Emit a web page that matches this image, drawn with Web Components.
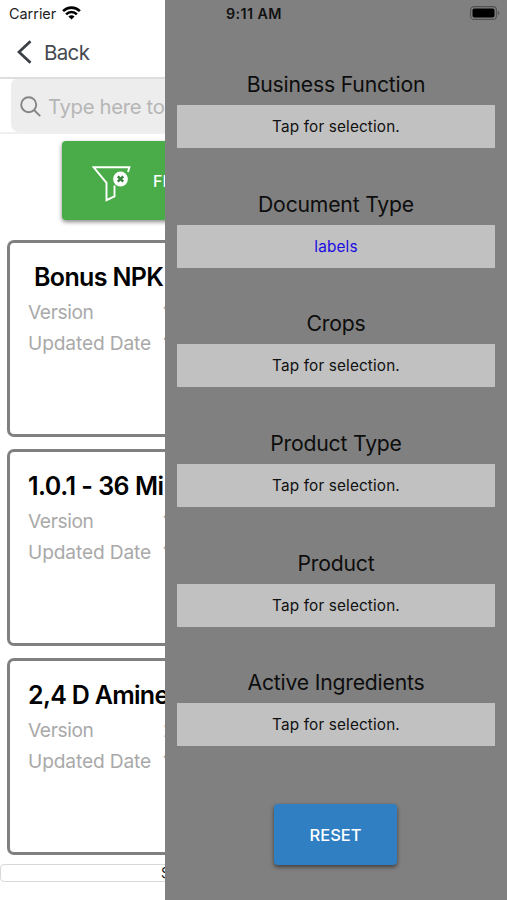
<!DOCTYPE html>
<html lang="en"><head><meta charset="utf-8"><title>Filters</title>
<style>
html,body{margin:0;height:100%;background:#fff;overflow:hidden}
body{font-family:Inter,"Liberation Sans",sans-serif}
</style></head><body>
<app-shell></app-shell>
<script>
const define=(name,html)=>customElements.define(name,class extends HTMLElement{
  connectedCallback(){
    if(this.shadowRoot)return;
    const root=this.attachShadow({mode:'open'});
    root.innerHTML=typeof html==='function'?html(this):html;
  }
});

define('status-left',`<style>
:host{display:flex;height:28px;align-items:center;gap:6px;padding:0 0 2px 9px;box-sizing:border-box;font-size:14.4px;color:#222}
svg{display:block;margin-top:-1px}
</style><span>Carrier</span>
<svg width="19" height="14" viewBox="0 0 19 14" fill="none" stroke="#000" stroke-width="2.6"><path d="M1.100 5.100C5.800.4 13.200.4 17.900 5.100"/><path d="M4.100 8.300c3-3 7.800-3 10.800 0"/><path d="M9.500 13.600 6.400 10.600c1.800-1.700 4.400-1.700 6.200 0z" fill="#000" stroke="none"/></svg>`);

define('nav-back',`<style>
:host{display:flex;height:51px;align-items:center;gap:12px;padding:0 0 1px 17px;box-sizing:border-box;border-bottom:2px solid #dedede;font-size:20.5px;color:#464a50;letter-spacing:-.65px}
svg{display:block}
</style><svg width="15" height="24" viewBox="0 0 15 24" fill="none" stroke="#3c4047" stroke-width="2.8"><path d="M13.500 1.200 2 12l11.500 10.800"/></svg><span><slot></slot></span>`);

define('search-field',`<style>
:host{display:block;height:55px;padding-left:11px;box-sizing:border-box;border-bottom:2px solid #f0f0f0}
div{height:53px;display:flex;align-items:center;gap:7px;background:#ededed;border-radius:6px 0 0 8px;padding:2px 0 0 9px;box-sizing:border-box;white-space:nowrap;font-size:20.300px;letter-spacing:-.32px;color:#b6b6b6}
svg{display:block;flex:none}
</style><div><svg width="21" height="21" viewBox="0 0 21 21" fill="none" stroke="#858585" stroke-width="1.900"><circle cx="8.700" cy="8.700" r="7.500"/><path d="m14 14 6.200 6.200"/></svg><span><slot></slot></span></div>`);

define('filter-button',`<style>
:host{display:flex;flex:none;align-items:center;width:383px;height:79px;margin:7px 0 0 62px;padding-left:30px;box-sizing:border-box;gap:22px;border-radius:4px;background:#4aac48;color:#fff;font-weight:500;font-size:16px;box-shadow:0 2px 4px #0007}
svg{display:block;margin-top:6px}
</style><svg width="39" height="36" viewBox="0 0 39 36" fill="none" stroke="#fff" stroke-width="1.900"><path d="M36 6 37.400 1.300H1.700L14.500 16.800V34.200L22.500 30.300V19.500"/><circle cx="28.500" cy="13" r="7.400" fill="#fff" stroke="none"/><path d="m25.800 10.300 5.400 5.400m0-5.400-5.400 5.400" stroke="#36833a" stroke-width="2.400"/></svg><span><slot></slot></span>`);

define('label-card',el=>`<style>
:host{display:block;flex:none;width:493px;height:197px;box-sizing:border-box;border:3px solid #808080;border-radius:7px;padding:16px 0 0 18px;white-space:nowrap}
h2{margin:0 0 1.500px;height:36px;line-height:36px;font-size:25px;font-weight:600;letter-spacing:var(--title-spacing,-.45px);padding-left:var(--title-indent,0)}
dl{margin:0;display:grid;grid-template-columns:135px 1fr;grid-auto-rows:31px;line-height:31px;font-size:19.200px;color:#a9a9a9}
dt,dd{margin:0}
dt:first-child{letter-spacing:-.4px}
dt{letter-spacing:-.15px}
</style><h2><slot></slot></h2><dl><dt>Version</dt><dd>${el.getAttribute('version')}</dd><dt>Updated Date</dt><dd>${el.getAttribute('updated')}</dd></dl>`);

define('sync-bar',`<style>
:host{display:block;flex:none;margin-top:9px;width:507px;height:18px;line-height:16px;box-sizing:border-box;border:1px solid #d8d8d8;border-radius:4px;padding-left:160px;font-size:14px;color:#222}
</style><slot></slot>`);

define('document-list',`<style>
:host{display:flex;flex-direction:column;min-width:0;overflow:hidden;background:#fff;height:900px}
.cards{display:flex;flex-direction:column;gap:12px;padding:20px 0 0 7px}
.first{--title-indent:6px;--title-spacing:-.65px}
.second{--title-spacing:-.5px}
.third{--title-spacing:-.7px}
</style><status-left></status-left><nav-back>Back</nav-back><search-field>Type here to</search-field>
<filter-button>FI</filter-button>
<div class="cards"><label-card class="first" version="1" updated="1">Bonus NPK</label-card><label-card class="second" version="1" updated="1">1.0.1 - 36 Mi</label-card><label-card class="third" version="2" updated="1">2,4 D Amine</label-card></div>
<sync-bar>S</sync-bar>`);

define('status-right',`<style>
:host{display:flex;justify-content:space-between;height:28px;align-items:center;padding:0 7px 1px 61px;box-sizing:border-box;font-size:14.300px;font-weight:600;letter-spacing:.4px;color:#111}
svg{display:block;margin-top:-1px}
</style><span>9:11 AM</span><svg width="30" height="14" viewBox="0 0 30 14"><rect x=".600" y=".600" width="25.800" height="12.800" rx="3.500" fill="none" stroke="#515151" stroke-width="1.100"/><rect x="2.500" y="2.500" width="22" height="9" rx="1.800"/><path d="M27.800 4.700c2 .8 2 3.800 0 4.600z" fill="#555"/></svg>`);

define('filter-select',el=>`<style>
:host{display:block;height:119.700px;text-align:center}
h3{margin:0;height:37px;line-height:32px;box-sizing:border-box;font-size:21.200px;font-weight:400;color:#0d0d0d;letter-spacing:-.2px}
button{display:block;width:100%;height:43px;padding:0;border:0;background:#c1c1c1;font:400 15.300px Inter,"Liberation Sans",sans-serif;letter-spacing:.15px;color:#111}
:host([selected]) button{color:#1a0be0}
</style><h3>${el.getAttribute('label')}</h3><button><slot>Tap for selection.</slot></button>`);

define('reset-button',`<style>
:host{display:flex;width:123px;height:61px;margin:18px auto 0;align-items:center;justify-content:center;position:relative;left:-.500px;border-radius:4px;background:#307fc3;color:#fff;font-size:16.500px;font-weight:500;box-shadow:0 2px 4px #0008}
</style><slot></slot>`);

define('filter-drawer',`<style>
:host{display:block;background:#808080;height:900px}
.body{padding:40px 12px 0}
</style><status-right></status-right><div class="body">
<filter-select label="Business Function"></filter-select>
<filter-select label="Document Type" selected>labels</filter-select>
<filter-select label="Crops"></filter-select>
<filter-select label="Product Type"></filter-select>
<filter-select label="Product"></filter-select>
<filter-select label="Active Ingredients"></filter-select>
<reset-button>RESET</reset-button></div>`);

define('app-shell',`<style>
:host{display:grid;grid-template-columns:165px 342px;width:507px;height:900px;overflow:hidden}
</style><document-list></document-list><filter-drawer></filter-drawer>`);
</script></body></html>
